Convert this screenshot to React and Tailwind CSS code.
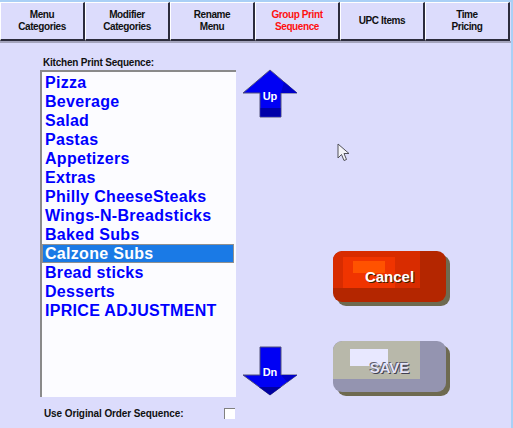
import { useState } from "react";

const tabs = [
  ["Menu", "Categories"],
  ["Modifier", "Categories"],
  ["Rename", "Menu"],
  ["Group Print", "Sequence"],
  ["UPC Items"],
  ["Time", "Pricing"],
];

const groups = [
  "Pizza",
  "Beverage",
  "Salad",
  "Pastas",
  "Appetizers",
  "Extras",
  "Philly CheeseSteaks",
  "Wings-N-Breadsticks",
  "Baked Subs",
  "Calzone Subs",
  "Bread sticks",
  "Desserts",
  "IPRICE ADJUSTMENT",
];

function UpArrow() {
  return (
    <svg width="56" height="50" viewBox="0 0 56 50">
      <polygon points="1,24 28,1 55,24 39,24 39,48 18,48 18,24" fill="#0000f4" stroke="#50507a" strokeWidth="1" />
      <polygon points="39,24 55,24 42,13" fill="#0000c8" />
      <rect x="18.5" y="39" width="20" height="8.5" fill="#0000a8" />
      <text x="28" y="31" textAnchor="middle" fill="#fff" fontSize="11" fontWeight="bold" fontFamily="'Liberation Sans', Arial, sans-serif">
        Up
      </text>
    </svg>
  );
}

function DownArrow() {
  return (
    <svg width="56" height="50" viewBox="0 0 56 50">
      <polygon points="18,1 39,1 39,29 55,29 28,49 1,29 18,29" fill="#0000f4" stroke="#50507a" strokeWidth="1" />
      <polygon points="17,41 39,41 28,49" fill="#0000a0" />
      <polygon points="39,29 55,29 45,36" fill="#0000c8" />
      <text x="28" y="30" textAnchor="middle" fill="#fff" fontSize="11" fontWeight="bold" fontFamily="'Liberation Sans', Arial, sans-serif">
        Dn
      </text>
    </svg>
  );
}

function App() {
  const [selected, setSelected] = useState(9);
  const [useOriginal, setUseOriginal] = useState(false);

  return (
    <div
      className="relative w-[513px] h-[428px] overflow-hidden bg-[#dcdcfc] border-t-2 border-r-2 border-[#aad0f6]"
      style={{ fontFamily: "'Liberation Sans', Arial, sans-serif" }}
    >
      {/* Tabs */}
      <div className="flex">
        {tabs.map((t, i) => (
          <div
            key={i}
            className={`w-[85px] h-[39px] flex flex-col items-center justify-center border-t border-l border-white border-r-2 border-b-2 border-r-[#2c2c3c] border-b-[#2c2c3c] bg-[#dcdcfc] text-[10px] leading-[12px] font-bold tracking-[-0.4px] ${
              i === 3 ? "text-[#ff1010]" : "text-[#101010]"
            }`}
          >
            {t.map((line) => (
              <span key={line}>{line}</span>
            ))}
          </div>
        ))}
      </div>
      <div className="h-[2px] bg-[#a4a4bc]" />

      <div className="flex pl-[40px] pt-[13px]">
        {/* List column */}
        <div className="w-[196px] flex flex-col">
          <div className="h-[14px] pl-[3px] text-[10px] leading-[14px] font-bold tracking-[-0.2px] text-[#101010]">
            Kitchen Print Sequence:
          </div>
          <div className="h-[327px] bg-[#fcfcff] border-t-2 border-l-2 border-[#8a8a8a] pt-[1px] pr-[2px]">
            {groups.map((g, i) => (
              <div
                key={g}
                onClick={() => setSelected(i)}
                className={`h-[19px] pl-[3px] text-[16px] leading-[19px] font-bold tracking-[0.3px] whitespace-nowrap ${
                  selected === i
                    ? "bg-[#1a7ae6] text-white outline outline-1 outline-[#909090] -outline-offset-1"
                    : "text-[#0000ff]"
                }`}
              >
                {g}
              </div>
            ))}
          </div>
          <div className="mt-[10px] flex items-center h-[12px]">
            <span className="pl-[4px] text-[10px] font-bold tracking-[-0.1px] text-[#101010] flex-1">
              Use Original Order Sequence:
            </span>
            <button
              onClick={() => setUseOriginal(!useOriginal)}
              className="w-[11px] h-[11px] mr-[1px] bg-white border-t border-l border-[#808080] text-[9px] leading-[9px]"
            >
              {useOriginal ? "✓" : ""}
            </button>
          </div>
        </div>

        {/* Arrows */}
        <div className="ml-[6px] mt-[13px] h-[327px] w-[56px] flex flex-col justify-between">
          <UpArrow />
          <DownArrow />
        </div>

        {/* Buttons */}
        <div className="ml-[35px] pt-[195px] flex flex-col gap-[39px]">
          <button className="relative w-[113px] h-[51px] rounded-[9px] bg-[#b42600] shadow-[4px_4px_0_#6e6a50] overflow-hidden">
            <span className="absolute left-0 top-0 w-[87px] h-[37px] bg-[#d82c00] rounded-tl-[9px]" />
            <span className="absolute left-[10px] top-[6px] w-[52px] h-[31px] bg-[#f03400]" />
            <span className="absolute left-[20px] top-[10px] w-[32px] h-[12px] bg-[#ff5200]" />
            <span className="relative text-white text-[15px] font-bold [text-shadow:1px_1px_0_#402000]">Cancel</span>
          </button>
          <button className="relative w-[113px] h-[51px] rounded-[9px] bg-[#9494b0] shadow-[4px_4px_0_#6e6a50] overflow-hidden">
            <span className="absolute left-0 top-0 w-[87px] h-[38px] bg-[#b8b8aa] rounded-tl-[9px]" />
            <span className="absolute left-[17px] top-[8px] w-[38px] h-[17px] bg-[#e8e8ff]" />
            <span className="relative top-[1px] text-[#e4e4f8] text-[15px] font-bold [text-shadow:1px_1px_0_#404050,-1px_-1px_0_#606070]">
              SAVE
            </span>
          </button>
        </div>
      </div>

      {/* Mouse cursor */}
      <svg className="absolute left-[337px] top-[141px]" width="14" height="20" viewBox="0 0 14 20">
        <path d="M1 1 L1 15 L4.5 11.5 L7 17.5 L9.5 16.5 L7 10.5 L12 10.5 Z" fill="#f4f4f8" stroke="#505058" strokeWidth="1" strokeLinejoin="round" />
      </svg>
    </div>
  );
}

export default App;
